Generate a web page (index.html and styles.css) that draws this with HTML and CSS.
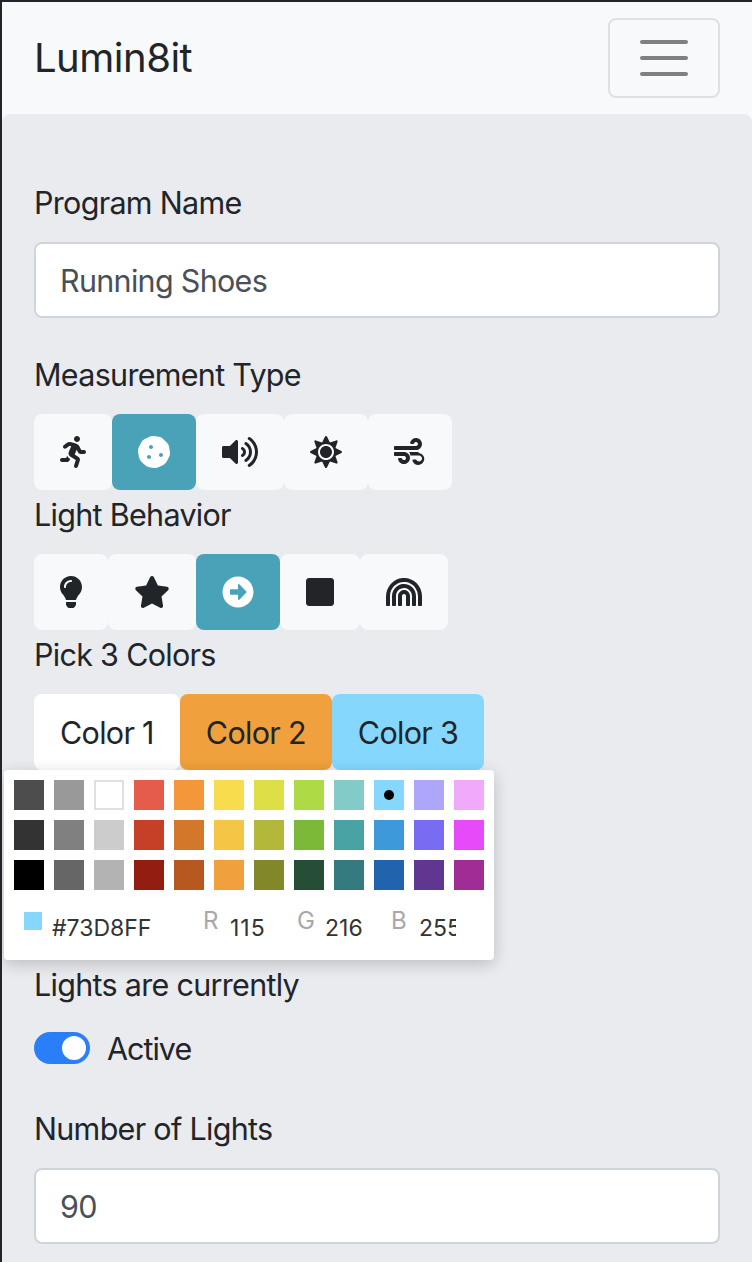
FILE: index.html
```html
<!DOCTYPE html>
<html lang="en">
<head>
<meta charset="utf-8">
<title>Lumin8it</title>
<link rel="stylesheet" href="styles.css">
</head>
<body>
<nav class="navbar">
  <span class="brand">Lumin8it</span>
  <button class="toggler" type="button" aria-label="Menu"><span class="bar"></span><span class="bar"></span><span class="bar"></span></button>
</nav>
<main class="panel">
  <label class="label">Program Name</label>
  <input class="field" type="text" value="Running Shoes">
  <label class="label label-spaced">Measurement Type</label>
  <div class="btn-row">
    <button class="btn" type="button"><svg class="icon w26" viewBox="0 0 416 512"><path d="M272 96c26.51 0 48-21.49 48-48S298.51 0 272 0s-48 21.49-48 48 21.49 48 48 48zM113.69 317.47l-14.8 34.52H32c-17.67 0-32 14.33-32 32s14.33 32 32 32h77.45c19.25 0 36.58-11.44 44.11-29.09l8.79-20.52-10.67-6.3c-17.32-10.23-30.06-25.37-37.99-42.61zM384 223.99h-44.03l-26.06-53.25c-12.5-25.55-35.45-44.23-61.78-50.94l-71.08-21.14c-28.3-6.8-57.77-.55-80.84 17.14l-39.67 30.41c-14.03 10.75-16.69 30.83-5.92 44.86s30.84 16.66 44.86 5.92l39.69-30.41c7.67-5.89 17.44-8 25.27-6.14l14.7 4.37-37.46 87.39c-12.62 29.48-1.31 64.01 26.3 80.31l84.98 50.17-27.47 87.73c-5.28 16.86 4.11 34.81 20.97 40.09 3.19 1 6.41 1.48 9.58 1.48 13.61 0 26.23-8.77 30.52-22.45l31.64-101.06c5.91-20.77-2.89-43.08-21.64-54.39l-61.24-36.14 31.31-78.28 20.27 41.43c8 16.34 24.92 26.89 43.11 26.89H384c17.67 0 32-14.33 32-32s-14.33-31.99-32-31.99z"/></svg></button>
    <button class="btn btn-active" type="button"><svg class="icon w32" viewBox="0 0 512 512"><path d="M510.37 254.79l-12.08-76.26a132.493 132.493 0 0 0-37.16-72.95l-54.76-54.75c-19.73-19.72-45.18-32.7-72.71-37.05l-76.7-12.15c-27.51-4.36-55.69.2-80.52 12.85L107.32 49.6a132.25 132.25 0 0 0-57.79 57.8l-35.1 68.88a132.602 132.602 0 0 0-12.82 80.94l12.08 76.27a132.493 132.493 0 0 0 37.16 72.95l54.76 54.75a132.087 132.087 0 0 0 72.71 37.05l76.7 12.14c27.51 4.36 55.69-.2 80.52-12.85l68.82-35.07a132.302 132.302 0 0 0 57.79-57.8l35.1-68.87c12.71-24.96 17.2-53.3 12.82-80.96zM176 368c-17.67 0-32-14.33-32-32s14.33-32 32-32 32 14.33 32 32-14.33 32-32 32zm32-160c-17.67 0-32-14.33-32-32s14.33-32 32-32 32 14.33 32 32-14.33 32-32 32zm160 128c-17.67 0-32-14.33-32-32s14.33-32 32-32 32 14.33 32 32-14.33 32-32 32z"/></svg></button>
    <button class="btn" type="button"><svg class="icon w36" viewBox="0 0 576 512"><path d="M215.03 71.05L126.06 160H24c-13.26 0-24 10.74-24 24v144c0 13.25 10.74 24 24 24h102.06l88.97 88.95c15.03 15.03 40.97 4.47 40.97-16.97V88.02c0-21.46-25.96-31.98-40.97-16.97zm233.32-51.08c-11.17-7.33-26.18-4.24-33.51 6.95-7.34 11.17-4.22 26.18 6.95 33.51 66.27 43.49 105.82 116.6 105.82 195.58 0 78.98-39.55 152.09-105.82 195.58-11.17 7.32-14.29 22.34-6.95 33.5 7.04 10.71 21.93 14.56 33.51 6.95C528.27 439.58 576 351.33 576 256S528.27 72.43 448.35 19.97zM480 256c0-63.53-32.06-121.94-85.77-156.24-11.19-7.14-26.03-3.82-33.12 7.46s-3.78 26.21 7.41 33.36C408.27 165.97 432 209.11 432 256s-23.73 90.03-63.48 115.42c-11.19 7.14-14.5 22.07-7.41 33.36 6.51 10.36 21.12 15.14 33.12 7.46C447.94 377.94 480 319.54 480 256zm-141.77-76.87c-11.58-6.33-26.19-2.16-32.61 9.45-6.39 11.61-2.16 26.2 9.45 32.61C327.98 228.28 336 241.63 336 256c0 14.38-8.02 27.72-20.92 34.81-11.61 6.41-15.84 21-9.45 32.61 6.43 11.66 21.05 15.8 32.61 9.45 28.23-15.55 45.77-45 45.77-76.88s-17.54-61.32-45.78-76.86z"/></svg></button>
    <button class="btn" type="button"><svg class="icon w32" viewBox="0 0 512 512"><path d="M256 160c-52.9 0-96 43.1-96 96s43.1 96 96 96 96-43.1 96-96-43.1-96-96-96zm246.4 80.5l-94.7-47.3 33.5-100.4c4.5-13.6-8.4-26.5-21.9-21.9l-100.4 33.5-47.4-94.8c-6.4-12.8-24.6-12.8-31 0l-47.3 94.7L92.7 70.8c-13.6-4.5-26.5 8.4-21.9 21.9l33.5 100.4-94.7 47.4c-12.8 6.4-12.8 24.6 0 31l94.7 47.3-33.5 100.5c-4.5 13.6 8.4 26.5 21.9 21.9l100.4-33.5 47.3 94.7c6.4 12.8 24.6 12.8 31 0l47.3-94.7 100.4 33.5c13.6 4.5 26.5-8.4 21.9-21.9l-33.5-100.4 94.7-47.3c13-6.5 13-24.7.2-31.1zm-155.9 106c-49.9 49.9-131.1 49.9-181 0-49.9-49.9-49.9-131.1 0-181 49.9-49.9 131.1-49.9 181 0 49.9 49.9 49.9 131.1 0 181z"/></svg></button>
    <button class="btn" type="button"><svg class="icon w32" viewBox="0 0 512 512"><path d="M156.7 256H16c-8.8 0-16 7.2-16 16v32c0 8.8 7.2 16 16 16h142.2c15.9 0 30.8 10.9 33.4 26.6 3.3 20-12.1 37.4-31.6 37.4-14.1 0-26.1-9.2-30.4-21.9-2.1-6.3-8.6-10.1-15.2-10.1H81.6c-9.8 0-17.7 8.8-15.9 18.4 8.6 44.1 47.6 77.6 94.2 77.6 57.1 0 102.7-50.1 95.2-108.6C249 291 205.4 256 156.7 256zM16 224h336c59.7 0 106.8-54.8 93.8-116.7-7.6-36.2-36.9-65.5-73.1-73.1-55.4-11.6-105.1 24.9-114.9 75.5-1.9 9.6 6.1 18.3 15.8 18.3h32.8c6.7 0 13.1-3.8 15.2-10.1C325.9 105.2 337.9 96 352 96c19.4 0 34.9 17.4 31.6 37.4-2.6 15.7-17.4 26.6-33.4 26.6H16c-8.8 0-16 7.2-16 16v32c0 8.8 7.2 16 16 16zm384 32H243.5c9.6 16.9 15.9 35.9 18.4 56H400c26.5 0 48 21.5 48 48s-21.5 48-48 48c-17.5 0-32.7-9.5-41-23.5-2.9-4.9-8.4-7.5-14.1-7.5h-33.8c-10.9 0-19 11.3-15.2 21.5 13.9 37.7 50.1 64.5 92.1 64.5 57.3 0 103.3-50.3 95.5-109.1-6.4-48.5-49.3-82.9-98.5-82.9z"/></svg></button>
  </div>
  <label class="label">Light Behavior</label>
  <div class="btn-row">
    <button class="btn" type="button"><svg class="icon w22" viewBox="0 0 352 512"><path d="M96.06 454.35c.01 6.29 1.87 12.45 5.36 17.69l17.09 25.69a31.99 31.99 0 0 0 26.64 14.28h61.71a31.99 31.99 0 0 0 26.64-14.28l17.09-25.69a31.989 31.989 0 0 0 5.36-17.69l.04-38.35H96.01l.05 38.35zM0 176c0 44.37 16.45 84.85 43.56 115.78 16.52 18.85 42.36 58.23 52.21 91.45.04.26.07.52.11.78h160.24c.04-.26.07-.51.11-.78 9.85-33.22 35.69-72.6 52.21-91.45C335.55 260.85 352 220.37 352 176 352 78.61 272.91-.3 175.45 0 73.44.31 0 82.97 0 176zm176-80c-44.11 0-80 35.89-80 80 0 8.84-7.16 16-16 16s-16-7.16-16-16c0-61.76 50.24-112 112-112 8.84 0 16 7.16 16 16s-7.16 16-16 16z"/></svg></button>
    <button class="btn" type="button"><svg class="icon w36" viewBox="0 0 576 512"><path d="M259.3 17.8L194 150.2 47.9 171.5c-26.2 3.8-36.7 36.1-17.7 54.6l105.7 103-25 145.5c-4.5 26.3 23.2 46 46.4 33.7L288 439.6l130.7 68.7c23.2 12.2 50.9-7.4 46.4-33.7l-25-145.5 105.7-103c19-18.5 8.5-50.8-17.7-54.6L382 150.2 316.7 17.8c-11.7-23.6-45.6-23.9-57.4 0z"/></svg></button>
    <button class="btn btn-active" type="button"><svg class="icon w32" viewBox="0 0 512 512"><path d="M256 8c137 0 248 111 248 248S393 504 256 504 8 393 8 256 119 8 256 8zM140 300h116v70.9c0 10.7 13 16.1 20.5 8.5l114.3-114.9c4.7-4.7 4.7-12.2 0-16.9l-114.3-115c-7.6-7.6-20.5-2.2-20.5 8.5V212H140c-6.6 0-12 5.4-12 12v64c0 6.6 5.4 12 12 12z"/></svg></button>
    <button class="btn" type="button"><svg class="icon w28" viewBox="0 0 448 512"><path d="M400 32H48C21.5 32 0 53.5 0 80v352c0 26.5 21.5 48 48 48h352c26.5 0 48-21.5 48-48V80c0-26.5-21.5-48-48-48z"/></svg></button>
    <button class="btn" type="button"><svg class="icon w36" viewBox="0 0 576 512"><path d="M268.3 32.7C115.4 42.9 0 176.9 0 330.2V464c0 8.8 7.2 16 16 16h32c8.8 0 16-7.2 16-16V320C64 186.8 180.9 80.3 317.5 97.9 430.4 112.4 512 214 512 327.8V464c0 8.8 7.2 16 16 16h32c8.8 0 16-7.2 16-16V320c0-165.3-140-298.6-307.7-287.3zm-5.6 96.9C166 142 96 229.1 96 326.7V464c0 8.8 7.2 16 16 16h32c8.8 0 16-7.2 16-16V320c0-74.8 64.5-134.8 140.8-127.4 66.5 6.5 115.2 66.2 115.2 133.1V464c0 8.8 7.2 16 16 16h32c8.8 0 16-7.2 16-16V320c0-114.2-100.2-205.4-217.3-190.4zm6.2 96.7c-45.6 8.9-76.9 51.5-76.9 97.9V464c0 8.8 7.2 16 16 16h32c8.8 0 16-7.2 16-16V320c0-17.6 14.3-32 32-32s32 14.4 32 32v144c0 8.8 7.2 16 16 16h32c8.8 0 16-7.2 16-16V320c0-59.2-53.8-106-115.1-93.7z"/></svg></button>
  </div>
  <label class="label">Pick 3 Colors</label>
  <div class="btn-row">
    <button class="btn btn-white" type="button">Color 1</button>
    <button class="btn btn-orange" type="button">Color 2</button>
    <button class="btn btn-sky" type="button">Color 3</button>
  </div>
  <div class="picker">
    <div class="swatches">
      <span class="swatch c-4d"></span><span class="swatch c-99"></span><span class="swatch c-ff"></span><span class="swatch c-r1"></span><span class="swatch c-o1"></span><span class="swatch c-y1"></span><span class="swatch c-l1"></span><span class="swatch c-g1"></span><span class="swatch c-t1"></span><span class="swatch c-b1"><span class="dot"></span></span><span class="swatch c-v1"></span><span class="swatch c-m1"></span>
      <span class="swatch c-33"></span><span class="swatch c-80"></span><span class="swatch c-cc"></span><span class="swatch c-r2"></span><span class="swatch c-o2"></span><span class="swatch c-y2"></span><span class="swatch c-l2"></span><span class="swatch c-g2"></span><span class="swatch c-t2"></span><span class="swatch c-b2"></span><span class="swatch c-v2"></span><span class="swatch c-m2"></span>
      <span class="swatch c-00"></span><span class="swatch c-66"></span><span class="swatch c-b3"></span><span class="swatch c-r3"></span><span class="swatch c-o3"></span><span class="swatch c-y3"></span><span class="swatch c-l3"></span><span class="swatch c-g3"></span><span class="swatch c-t3"></span><span class="swatch c-b4"></span><span class="swatch c-v3"></span><span class="swatch c-m3"></span>
    </div>
    <div class="fields">
      <span class="preview"></span>
      <span class="value hex">#73D8FF</span>
      <span class="chan chan-r">R</span><span class="value val-r">115</span>
      <span class="chan chan-g">G</span><span class="value val-g">216</span>
      <span class="chan chan-b">B</span><span class="value val-b">255</span>
    </div>
  </div>
  <label class="label">Lights are currently</label>
  <div class="switch-row">
    <span class="switch"><span class="knob"></span></span>
    <span class="switch-text">Active</span>
  </div>
  <label class="label label-spaced">Number of Lights</label>
  <input class="field" type="text" value="90">
</main>
</body>
</html>
```
FILE: styles.css
```css
* { box-sizing: border-box; }
html, body { margin: 0; padding: 0; }
body {
  height: 1262px;
  overflow: hidden;
  background: #f8f9fa;
  border-top: 2px solid #212529;
  border-left: 2px solid #212529;
  font-family: Inter, "Liberation Sans", sans-serif;
  font-size: 30.5px;
  letter-spacing: -0.7px;
  color: #212529;
}
.navbar {
  height: 112px;
  display: flex;
  align-items: center;
  justify-content: space-between;
  padding: 0 32px;
}
.brand { font-size: 40px; line-height: 48px; letter-spacing: -0.5px; }
.toggler {
  width: 112px;
  height: 80px;
  background: transparent;
  border: 2px solid #dfe0e2;
  border-radius: 8px;
  display: flex;
  flex-direction: column;
  align-items: center;
  justify-content: center;
  gap: 12px;
  padding: 0;
}
.bar { width: 48px; height: 4px; border-radius: 2px; background: #808080; }
.panel {
  height: 1148px;
  background: #e9ebef;
  border-radius: 8px 8px 0 0;
  padding: 64px 32px 0;
}
.label { display: block; height: 48px; padding-top: 2px; line-height: 46px; margin-bottom: 16px; }
.label-spaced { margin-top: 32px; }
.field {
  display: block;
  width: 100%;
  height: 76px;
  padding: 0 24px;
  background: #fff;
  border: 2px solid #ced4da;
  border-radius: 8px;
  font: inherit;
  letter-spacing: inherit;
  color: #495057;
}
.btn-row { display: flex; height: 76px; }
.btn {
  height: 76px;
  padding: 0 26px;
  border: 0;
  border-radius: 8px;
  background: #f8f9fa;
  color: #212529;
  font: inherit;
  letter-spacing: inherit;
  display: flex;
  align-items: center;
}
.btn-active { background: #4aa2b8; color: #fff; }
.btn-white { background: #fff; }
.btn-orange { background: #f0a03c; }
.btn-sky { background: #86d7fe; }
.icon { height: 32px; display: block; fill: currentColor; }
.w22 { width: 22px; }
.w26 { width: 26px; }
.w28 { width: 28px; }
.w32 { width: 32px; }
.w36 { width: 36px; }
.picker {
  position: relative;
  width: 490px;
  height: 190px;
  margin-left: -30px;
  padding: 10px 10px 0;
  background: #fff;
  border-radius: 4px;
  box-shadow: 0 4px 16px rgba(0, 0, 0, .2);
}
.swatches {
  display: grid;
  grid-template-columns: repeat(12, 30px);
  grid-auto-rows: 30px;
  gap: 10px;
}
.swatch { display: flex; align-items: center; justify-content: center; }
.dot { width: 10px; height: 10px; border-radius: 50%; background: #000; }
.c-4d { background: #4d4d4d; } .c-99 { background: #999; } .c-ff { background: #fff; border: 2px solid #e0e0e0; }
.c-r1 { background: #e55c4a; } .c-o1 { background: #f4963a; } .c-y1 { background: #f9dc4e; }
.c-l1 { background: #dede47; } .c-g1 { background: #aedb45; } .c-t1 { background: #82cbc9; }
.c-b1 { background: #86d7fe; } .c-v1 { background: #ada6f9; } .c-m1 { background: #f1a9fb; }
.c-33 { background: #333; } .c-80 { background: #808080; } .c-cc { background: #ccc; }
.c-r2 { background: #c63f27; } .c-o2 { background: #d3772b; } .c-y2 { background: #f5c545; }
.c-l2 { background: #b3b83b; } .c-g2 { background: #7cb938; } .c-t2 { background: #49a3a4; }
.c-b2 { background: #3d99da; } .c-v2 { background: #786cf3; } .c-m2 { background: #e74af9; }
.c-00 { background: #000; } .c-66 { background: #666; } .c-b3 { background: #b3b3b3; }
.c-r3 { background: #941d12; } .c-o3 { background: #b65820; } .c-y3 { background: #f0a03c; }
.c-l3 { background: #82872a; } .c-g3 { background: #264e37; } .c-t3 { background: #347a7e; }
.c-b4 { background: #2263ae; } .c-v3 { background: #5f3790; } .c-m3 { background: #a02c96; }
.fields {
  display: flex;
  align-items: flex-start;
  margin-top: 22px;
  padding-left: 10px;
  font-size: 23px;
  line-height: 28px;
  letter-spacing: 0;
}
.preview { flex: none; width: 18px; height: 18px; margin-right: 10px; background: #86d7fe; }
.value { color: #333; margin-top: 2px; overflow: hidden; white-space: nowrap; flex: none; }
.hex { width: 151px; }
.chan { color: #a8a8a8; font-size: 24px; flex: none; margin-top: -5px; }
.chan-r { width: 27px; }
.chan-g { width: 28px; }
.chan-b { width: 28px; }
.val-r { width: 67px; letter-spacing: 1px; }
.val-g { width: 66px; }
.val-b { width: 37px; }
.switch-row { display: flex; align-items: center; gap: 17px; height: 48px; }
.switch-text { letter-spacing: -1px; }
.switch {
  width: 56px;
  height: 32px;
  border-radius: 16px;
  background: #2a7ff8;
  display: flex;
  justify-content: flex-end;
  align-items: center;
  padding-right: 4px;
}
.knob { width: 24px; height: 24px; border-radius: 50%; background: #fff; }
```
